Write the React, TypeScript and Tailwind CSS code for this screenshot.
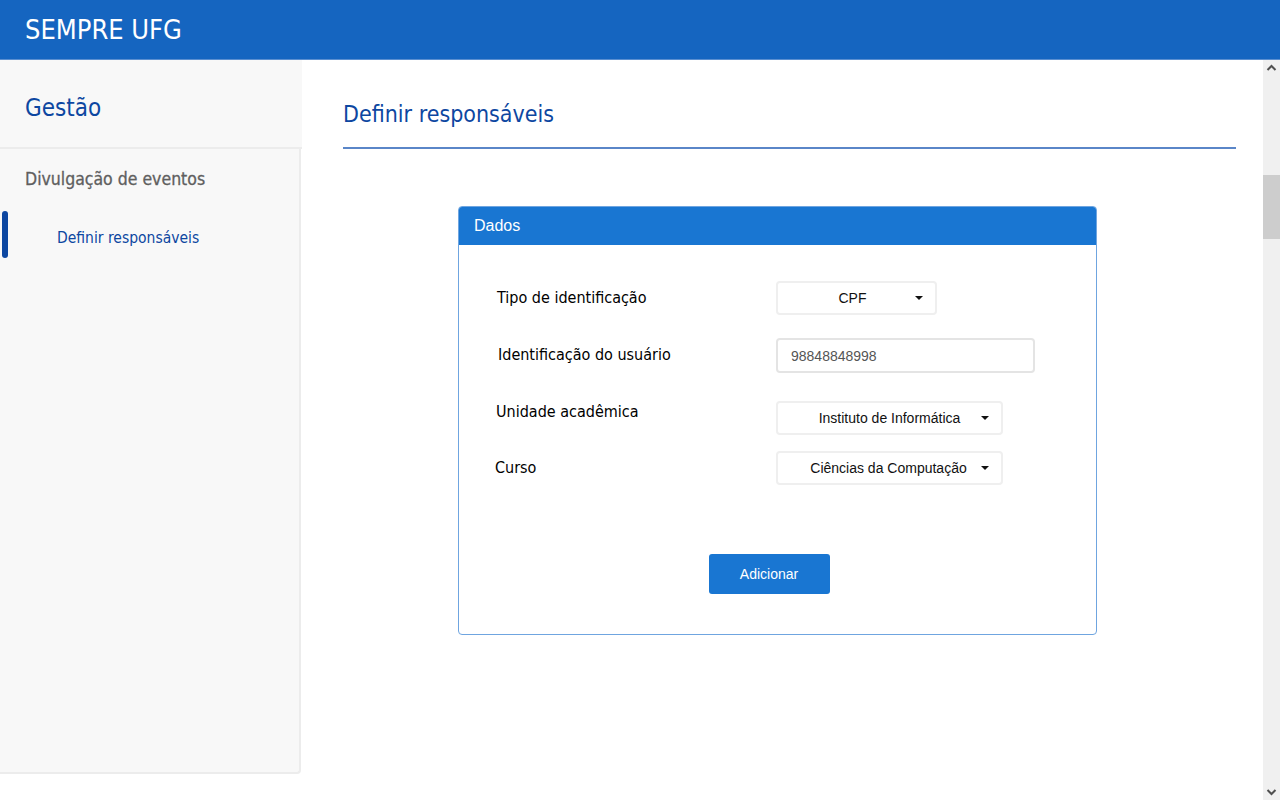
import React, { useState } from 'react';

const tahoma = { fontFamily: 'Tahoma, "DejaVu Sans Condensed", "Noto Sans", sans-serif' };

const Caret = () => (
  <svg width="8" height="4" viewBox="0 0 8 4" className="shrink-0">
    <path d="M0 0 L8 0 L4 4 Z" fill="#111" />
  </svg>
);

const SelectBox = ({ value, width, padLeft }: { value: string; width: string; padLeft: string }) => (
  <div
    className={`${width} h-[34px] flex items-center justify-between border-2 border-[#efefef] rounded-[4px] bg-white ${padLeft} pr-3 text-[14px] text-[#111]`}
    style={{ fontFamily: '"Liberation Sans", Arial, sans-serif' }}
  >
    <span className="flex-1 text-center">{value}</span>
    <Caret />
  </div>
);

const App = () => {
  const [userId, setUserId] = useState('98848848998');

  return (
    <div className="w-[1280px] h-[800px] overflow-hidden bg-white flex flex-col" style={tahoma}>
      {/* Header */}
      <header className="h-[60px] shrink-0 bg-[#1565c0] border-b border-[#5b8fd0] flex items-center px-[25px]">
        <h1 className="text-white text-[27px] leading-none">SEMPRE UFG</h1>
      </header>

      <div className="flex flex-1 min-h-0">
        {/* Sidebar */}
        <aside className="w-[301px] shrink-0 h-[714px] bg-[#f8f8f8] border-r-2 border-b-2 border-[#ececec] rounded-br-[4px] flex flex-col">
          <div className="h-[89px] w-[302px] border-b-2 border-[#ececec] bg-[#f8f8f8] flex items-center px-[25px] pt-[9px]">
            <h2 className="text-[#0d47a1] text-[24px]">Gestão</h2>
          </div>
          <div className="px-[25px] pt-[17px] text-[17.5px] text-[#5f5f5f] [-webkit-text-stroke:0.3px_#5f5f5f]">Divulgação de eventos</div>
          <div className="relative mt-[22px] h-[48px] flex items-center pl-[57px] text-[15.5px] text-[#0d47a1]">
            <span className="absolute left-[2px] -top-[3px] w-[6px] h-[47px] rounded-full bg-[#0d47a1]" />
            Definir responsáveis
          </div>
        </aside>

        {/* Main */}
        <main className="flex-1 min-w-0 flex">
          <div className="flex-1 pl-[42px] pr-[27px]">
            <div className="pt-[40px] pb-[19px] border-b-2 border-[#5a86c8]">
              <h2 className="text-[#0d47a1] text-[23px] leading-[28px]">Definir responsáveis</h2>
            </div>

            <div className="flex mt-[57px] ml-[115px]">
              <section className="w-[639px] h-[429px] border border-[#6fa5e0] rounded-[4px] overflow-hidden flex flex-col">
                <div
                  className="h-[38px] bg-[#1976d2] flex items-center px-[15px] text-white text-[16px]"
                  style={{ fontFamily: '"Liberation Sans", Arial, sans-serif' }}
                >
                  Dados
                </div>
                <div className="flex-1 flex flex-col pl-[38px] pt-[36px]">
                  <div className="grid grid-cols-[279px_1fr] items-center h-[34px]">
                    <span className="text-[16px] text-black">Tipo de identificação</span>
                    <SelectBox value="CPF" width="w-[161px]" padLeft="pl-[12px]" />
                  </div>
                  <div className="grid grid-cols-[279px_1fr] items-center h-[35px] mt-[23px]">
                    <span className="text-[16px] text-black pl-[1px] -mt-[2px]">Identificação do usuário</span>
                    <input
                      value={userId}
                      onChange={(e) => setUserId(e.target.value)}
                      className="w-[259px] h-[35px] border-2 border-[#e4e4e4] rounded-[4px] px-[13px] text-[14px] text-[#555] outline-none"
                      style={{ fontFamily: '"Liberation Sans", Arial, sans-serif' }}
                    />
                  </div>
                  <div className="grid grid-cols-[279px_1fr] items-center h-[34px] mt-[28px]">
                    <span className="text-[16px] text-black -mt-[12px] -ml-[1px]">Unidade acadêmica</span>
                    <SelectBox value="Instituto de Informática" width="w-[227px]" padLeft="pl-[20px]" />
                  </div>
                  <div className="grid grid-cols-[279px_1fr] items-center h-[34px] mt-[16px]">
                    <span className="text-[16px] text-black -ml-[2px]">Curso</span>
                    <SelectBox value="Ciências da Computação" width="w-[227px]" padLeft="pl-[18px]" />
                  </div>
                  <div className="flex justify-center mt-[69px] pr-[55px]">
                    <button
                      className="w-[121px] h-[40px] bg-[#1976d2] rounded-[3px] text-white text-[14px]"
                      style={{ fontFamily: '"Liberation Sans", Arial, sans-serif' }}
                    >
                      Adicionar
                    </button>
                  </div>
                </div>
              </section>
            </div>
          </div>

          {/* Scrollbar */}
          <div className="w-[17px] shrink-0 h-[740px] bg-[#f0f0f0] flex flex-col items-center">
            <svg width="17" height="17" viewBox="0 0 17 17">
              <path d="M4.5 10 L8.5 6 L12.5 10" stroke="#505050" strokeWidth="2" fill="none" />
            </svg>
            <div className="mt-[98px] w-[17px] h-[64px] bg-[#cdcdcd]" />
            <div className="flex-1" />
            <svg width="17" height="17" viewBox="0 0 17 17">
              <path d="M4.5 7 L8.5 11 L12.5 7" stroke="#505050" strokeWidth="2" fill="none" />
            </svg>
          </div>
        </main>
      </div>
    </div>
  );
};

export default App;
